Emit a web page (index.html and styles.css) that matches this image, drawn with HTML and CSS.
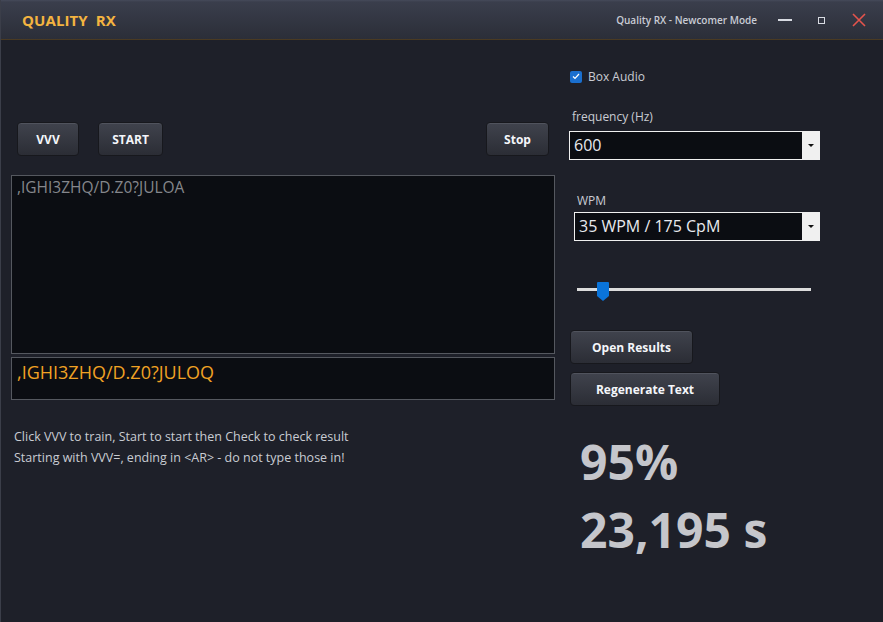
FILE: index.html
```html
<!doctype html>
<html lang="en">
<head>
    <meta charset="UTF-8">
    <title>Quality RX</title>
    <link rel="stylesheet" href="styles.css">
</head>
<body>
    <div class="window">

        <div class="titlebar">
            <div class="appname">QUALITY&nbsp;&nbsp;RX</div>
            <div class="modename">Quality RX - Newcomer Mode</div>
            <div class="winbtn minbtn"><span class="minbar"></span></div>
            <div class="winbtn maxbtn"><span class="maxbox"></span></div>
            <div class="winbtn closebtn">
                <svg width="14" height="14" viewBox="0 0 14 14">
                    <path d="M1 1 L13 13 M13 1 L1 13" stroke="#e4544c" stroke-width="1.6" fill="none"/>
                </svg>
            </div>
        </div>

        <div class="main">

            <div class="leftcol">
                <div class="btnrow">
                    <div class="button vvvbtn">VVV</div>
                    <div class="button startbtn">START</div>
                    <div class="spacer"></div>
                    <div class="button stopbtn">Stop</div>
                </div>

                <div class="sourcebox">,IGHI3ZHQ/D.Z0?JULOA</div>
                <div class="inputbox">,IGHI3ZHQ/D.Z0?JULOQ</div>

                <div class="help">
                    <div>Click VVV to train, Start to start then Check to check result</div>
                    <div>Starting with VVV=, ending in &lt;AR&gt; - do not type those in!</div>
                </div>
            </div>

            <div class="rightcol">
                <div class="checkrow">
                    <span class="checkbox">
                        <svg width="8" height="7" viewBox="0 0 8 7">
                            <path d="M1 3.5 L3 5.5 L7 1" stroke="#ffffff" stroke-width="1.2" fill="none"/>
                        </svg>
                    </span>
                    <span class="label">Box Audio</span>
                </div>

                <div class="label freqlabel">frequency (Hz)</div>
                <div class="combo freqcombo">
                    <div class="combotext">600</div>
                    <div class="comboarrow"><span class="tri"></span></div>
                </div>

                <div class="label wpmlabel">WPM</div>
                <div class="combo wpmcombo">
                    <div class="combotext">35 WPM / 175 CpM</div>
                    <div class="comboarrow"><span class="tri"></span></div>
                </div>

                <div class="slider">
                    <div class="track"></div>
                    <svg class="thumb" width="12" height="19" viewBox="0 0 12 19">
                        <path d="M1 0 H11 Q12 0 12 1 V14 L6 19 L0 14 V1 Q0 0 1 0 Z" fill="#0a74da"/>
                    </svg>
                </div>

                <div class="button resultsbtn">Open Results</div>
                <div class="button regenbtn">Regenerate Text</div>

                <div class="bignum scoretxt">95%</div>
                <div class="bignum timetxt">23,195 s</div>
            </div>

        </div>

    </div>
</body>
</html>
```

FILE: styles.css
```css
html, body
{
    margin:           0;
    padding:          0;
    background-color: #1e2029;
}

.window
{
    width:            882px;
    height:           622px;
    border-left:      1px solid #3b3e49;
    background-color: #1e2029;
    font-family:      "Open Sans", "Noto Sans", sans-serif;
    color:            #c9ccd3;
    overflow:         hidden;
}

/* title bar */

.titlebar
{
    height:           39px;
    display:          flex;
    align-items:      center;
    background:       linear-gradient(#454a5a 0px, #3a3e4c 2px, #2b2e38 39px);
    border-bottom:    1px solid #4a3a22;
}

.appname
{
    margin-left:      21px;
    font-size:        15px;
    font-weight:      700;
    color:            #f4b440;
    letter-spacing:   0.1px;
}

.modename
{
    margin-left:      auto;
    font-size:        10px;
    font-weight:      600;
    color:            #c9ccd5;
    margin-right:     19px;
}

.winbtn
{
    display:          flex;
    align-items:      center;
    justify-content:  center;
}

.minbtn
{
    width:            18px;
    margin-right:     22px;
}

.minbar
{
    display:          block;
    width:            14px;
    height:           2px;
    background-color: #d8dbe2;
}

.maxbtn
{
    width:            10px;
    margin-right:     26px;
    padding-top:      2px;
}

.maxbox
{
    display:          block;
    width:            5px;
    height:           5px;
    border:           1px solid #d8dbe2;
}

.closebtn
{
    margin-right:     17px;
}

/* main area */

.main
{
    display:          flex;
    height:           582px;
}

.leftcol
{
    width:            544px;
    padding-left:     10px;
}

.btnrow
{
    display:          flex;
    margin-top:       82px;
    padding:          0 6px;
    gap:              19px;
}

.spacer
{
    flex:             1;
}

.button
{
    height:           34px;
    display:          flex;
    align-items:      center;
    justify-content:  center;
    box-sizing:       border-box;
    border:           1px solid #17181d;
    border-radius:    4px;
    background:       linear-gradient(#40434d, #2b2d35);
    box-shadow:       inset 0 1px 0 #50535d;
    color:            #f4f6fa;
    font-size:        12px;
    font-weight:      700;
}

.vvvbtn
{
    width:            62px;
}

.startbtn
{
    width:            65px;
}

.stopbtn
{
    width:            63px;
}

.sourcebox
{
    margin-top:       19px;
    height:           179px;
    box-sizing:       border-box;
    border:           1px solid #55585f;
    background-color: #0b0d12;
    color:            #85878c;
    font-size:        15.5px;
    padding:          0 5px;
}

.inputbox
{
    margin-top:       3px;
    height:           43px;
    box-sizing:       border-box;
    border:           1px solid #55585f;
    background-color: #0b0d12;
    color:            #f0a224;
    font-size:        18px;
    padding:          2px 5px;
}

.help
{
    margin-top:       26px;
    padding-left:     3px;
    font-size:        12.5px;
    line-height:      21px;
}

/* right column */

.rightcol
{
    margin-left:      14px;
    width:            260px;
}

.checkrow
{
    display:          flex;
    align-items:      center;
    margin-top:       28px;
    margin-left:      1px;
}

.checkbox
{
    width:            12px;
    height:           12px;
    border-radius:    2px;
    background-color: #1a6fcf;
    display:          flex;
    align-items:      center;
    justify-content:  center;
    margin-right:     6px;
}

.label
{
    font-size:        12px;
    color:            #c9ccd3;
}

.freqlabel
{
    margin-top:       23px;
    margin-left:      3px;
}

.combo
{
    display:          flex;
    height:           29px;
    box-sizing:       border-box;
    border:           1px solid #f0f0f0;
    background-color: #0b0d12;
}

.freqcombo
{
    margin-top:       6px;
    width:            251px;
}

.wpmcombo
{
    margin-top:       3px;
    margin-left:      5px;
    width:            246px;
}

.combotext
{
    flex:             1;
    padding-left:     4px;
    font-size:        16px;
    line-height:      27px;
    color:            #e8eaef;
}

.comboarrow
{
    width:            17px;
    background-color: #f0f0f0;
    display:          flex;
    align-items:      center;
    justify-content:  center;
}

.tri
{
    width:            0;
    height:           0;
    border-left:      3px solid transparent;
    border-right:     3px solid transparent;
    border-top:       3px solid #111;
}

.wpmlabel
{
    margin-top:       32px;
    margin-left:      8px;
}

.slider
{
    position:         relative;
    margin-top:       41px;
    margin-left:      8px;
    width:            234px;
    height:           19px;
}

.track
{
    position:         absolute;
    left:             0;
    top:              6px;
    width:            234px;
    height:           3px;
    background-color: #dcdcdc;
}

.thumb
{
    position:         absolute;
    left:             20px;
    top:              0;
}

.resultsbtn
{
    margin-top:       29px;
    margin-left:      1px;
    width:            123px;
}

.regenbtn
{
    margin-top:       8px;
    margin-left:      1px;
    width:            150px;
}

.bignum
{
    margin-left:      11px;
    font-size:        48px;
    font-weight:      700;
    color:            #c5c6cb;
    line-height:      68px;
}

.scoretxt
{
    margin-top:       22px;
}
```
